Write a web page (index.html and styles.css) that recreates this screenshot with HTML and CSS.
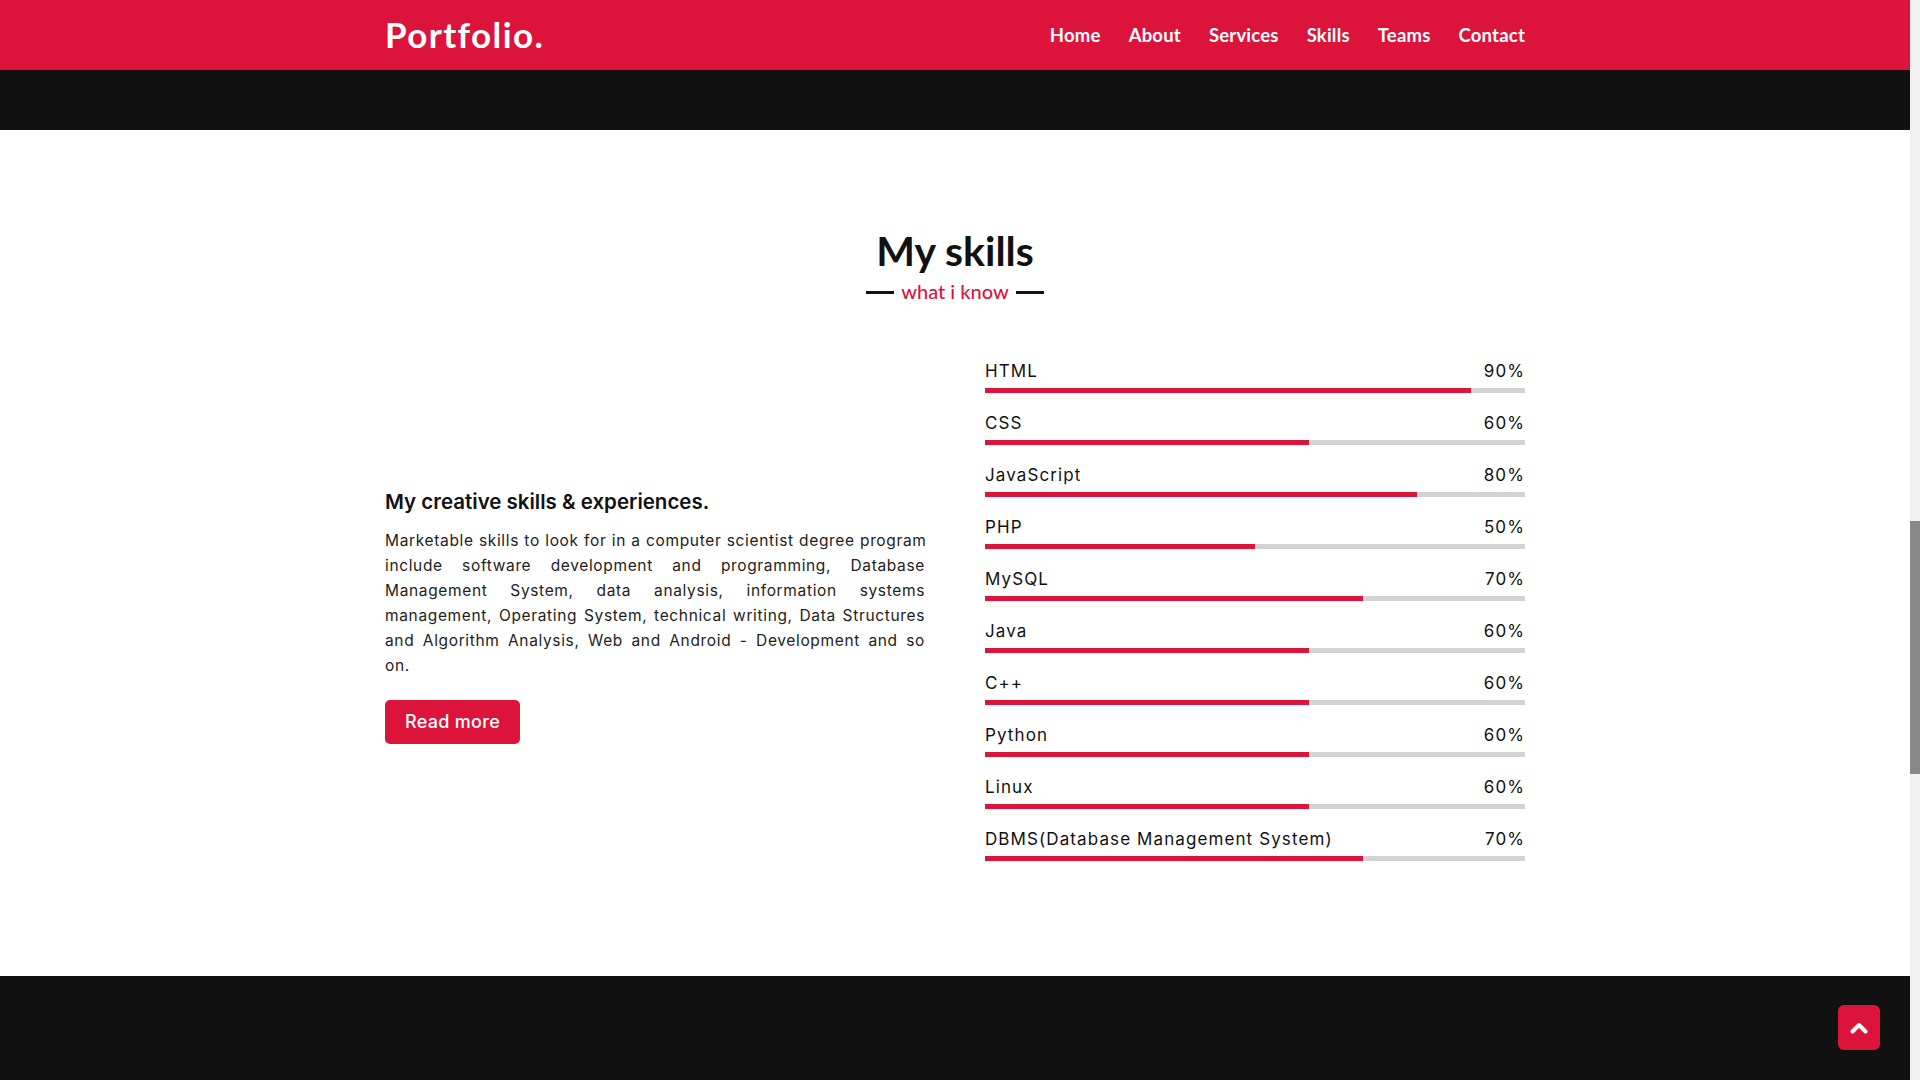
FILE: index.html
```html
<!DOCTYPE html>
<html lang="en">
<head>
<meta charset="utf-8">
<title>Portfolio - Skills</title>
<link rel="stylesheet" href="styles.css">
</head>
<body>
<div class="page">
  <header class="navbar">
    <div class="container nav-inner">
      <a class="logo" href="#">Portfolio.</a>
      <nav class="menu">
        <a href="#">Home</a>
        <a href="#">About</a>
        <a href="#">Services</a>
        <a href="#">Skills</a>
        <a href="#">Teams</a>
        <a href="#">Contact</a>
      </nav>
    </div>
  </header>
  <div class="band"></div>
  <section class="skills">
    <div class="container">
      <div class="title-wrap">
        <h2 class="title">My skills</h2>
        <div class="subtitle"><span class="dash"></span><span>what i know</span><span class="dash"></span></div>
      </div>
      <div class="skills-content">
        <div class="column left">
          <h3 class="lead">My creative skills &amp; experiences.</h3>
          <p class="desc"><span class="nowrap">Marketable skills to look for in a computer scientist degree program</span> include software development and programming, Database Management System, data analysis, information systems management, Operating System, technical writing, Data Structures and Algorithm Analysis, Web and Android - Development and so on.</p>
          <a class="btn" href="#">Read more</a>
        </div>
        <div class="column right">
          <div class="bar"><div class="info"><span>HTML</span><span>90%</span></div><div class="line"><div class="fill" style="width:90%"></div></div></div>
          <div class="bar"><div class="info"><span>CSS</span><span>60%</span></div><div class="line"><div class="fill" style="width:60%"></div></div></div>
          <div class="bar"><div class="info"><span>JavaScript</span><span>80%</span></div><div class="line"><div class="fill" style="width:80%"></div></div></div>
          <div class="bar"><div class="info"><span>PHP</span><span>50%</span></div><div class="line"><div class="fill" style="width:50%"></div></div></div>
          <div class="bar"><div class="info"><span>MySQL</span><span>70%</span></div><div class="line"><div class="fill" style="width:70%"></div></div></div>
          <div class="bar"><div class="info"><span>Java</span><span>60%</span></div><div class="line"><div class="fill" style="width:60%"></div></div></div>
          <div class="bar"><div class="info"><span>C++</span><span>60%</span></div><div class="line"><div class="fill" style="width:60%"></div></div></div>
          <div class="bar"><div class="info"><span>Python</span><span>60%</span></div><div class="line"><div class="fill" style="width:60%"></div></div></div>
          <div class="bar"><div class="info"><span>Linux</span><span>60%</span></div><div class="line"><div class="fill" style="width:60%"></div></div></div>
          <div class="bar"><div class="info"><span>DBMS(Database Management System)</span><span>70%</span></div><div class="line"><div class="fill" style="width:70%"></div></div></div>
        </div>
      </div>
    </div>
  </section>
  <footer class="footer"></footer>
</div>
<div class="scrollbar"><div class="thumb"></div></div>
<a class="scroll-up" href="#" aria-label="Back to top">
  <svg viewBox="0 0 18 13" width="18" height="13"><path d="M2.5 10.5L9 4l6.5 6.5" fill="none" stroke="#fff" stroke-width="4" stroke-linecap="round" stroke-linejoin="round"/></svg>
</a>
</body>
</html>
```
FILE: styles.css
```css
* { box-sizing: border-box; margin: 0; padding: 0; }
html, body { height: 100%; }
body {
  display: flex;
  overflow: hidden;
  background: #fff;
  font-family: "Inter", "Open Sans", sans-serif;
  color: #111;
}
a { text-decoration: none; }
.page { flex: 1; display: flex; flex-direction: column; min-width: 0; }
.container { width: 1140px; margin: 0 auto; }

.navbar { background: #dc143c; height: 70px; display: flex; align-items: center; }
.nav-inner { display: flex; align-items: center; justify-content: space-between; }
.logo {
  color: #fff;
  font-family: "Lato", "Open Sans", sans-serif;
  font-weight: 700;
  font-size: 35px;
  letter-spacing: 1.4px;
  line-height: 1;
  margin-top: -2px;
}
.menu { display: flex; gap: 28px; }
.menu a {
  color: #fff;
  font-family: "Lato", "Open Sans", sans-serif;
  font-weight: 700;
  font-size: 18.5px;
  letter-spacing: 0.2px;
}

.band { background: #111; height: 60px; }

.skills { height: 846px; padding-top: 95px; }
.title-wrap { text-align: center; }
.title {
  font-family: "Lato", "Open Sans", sans-serif;
  font-weight: 700;
  font-size: 41px;
  line-height: 52px;
  color: #111;
}
.subtitle {
  display: flex; align-items: center; justify-content: center; gap: 7px;
  font-family: "Lato", "Open Sans", sans-serif;
  font-size: 20px; font-weight: 500;
  color: #dc143c;
  line-height: 24px;
  margin-top: 2px;
}
.dash { width: 28px; height: 3px; background: #111; margin-top: 3px; }

.skills-content {
  display: grid;
  grid-template-columns: minmax(0, 1fr) minmax(0, 1fr);
  column-gap: 60px;
  align-items: center;
  margin-top: 58px;
}
.left { padding-top: 10px; }
.lead {
  font-size: 20.5px; font-weight: 600; color: #111;
  line-height: 28px;
  margin-bottom: 12px;
}
.desc {
  font-size: 15.5px; line-height: 25px; color: #222;
  letter-spacing: 0.65px;
  word-spacing: 0.35px;
  text-align: justify;
}
.nowrap { white-space: nowrap; }
.btn {
  display: inline-block;
  margin-top: 22px;
  background: #dc143c; color: #fff;
  font-size: 18px; font-weight: 500;
  letter-spacing: 0.3px;
  padding: 0 20px;
  height: 44px; line-height: 44px;
  border-radius: 5px;
}
.bar + .bar { margin-top: 20px; }
.info {
  display: flex; justify-content: space-between;
  font-size: 17px; font-weight: 400; color: #111;
  letter-spacing: 1.1px;
  line-height: 20px;
}
.line { height: 5px; background: #d3d3d3; margin-top: 7px; }
.fill { height: 100%; background: #dc143c; }

.footer { flex: 1; background: #111; }

.scrollbar { width: 10px; background: #f1f1f1; height: 100%; padding-top: 521px; }
.thumb { height: 253px; background: #888; }

.scroll-up {
  position: fixed; right: 40px; bottom: 30px;
  width: 42px; height: 45px;
  background: #dc143c; border-radius: 6px;
  display: flex; align-items: center; justify-content: center;
}
```
